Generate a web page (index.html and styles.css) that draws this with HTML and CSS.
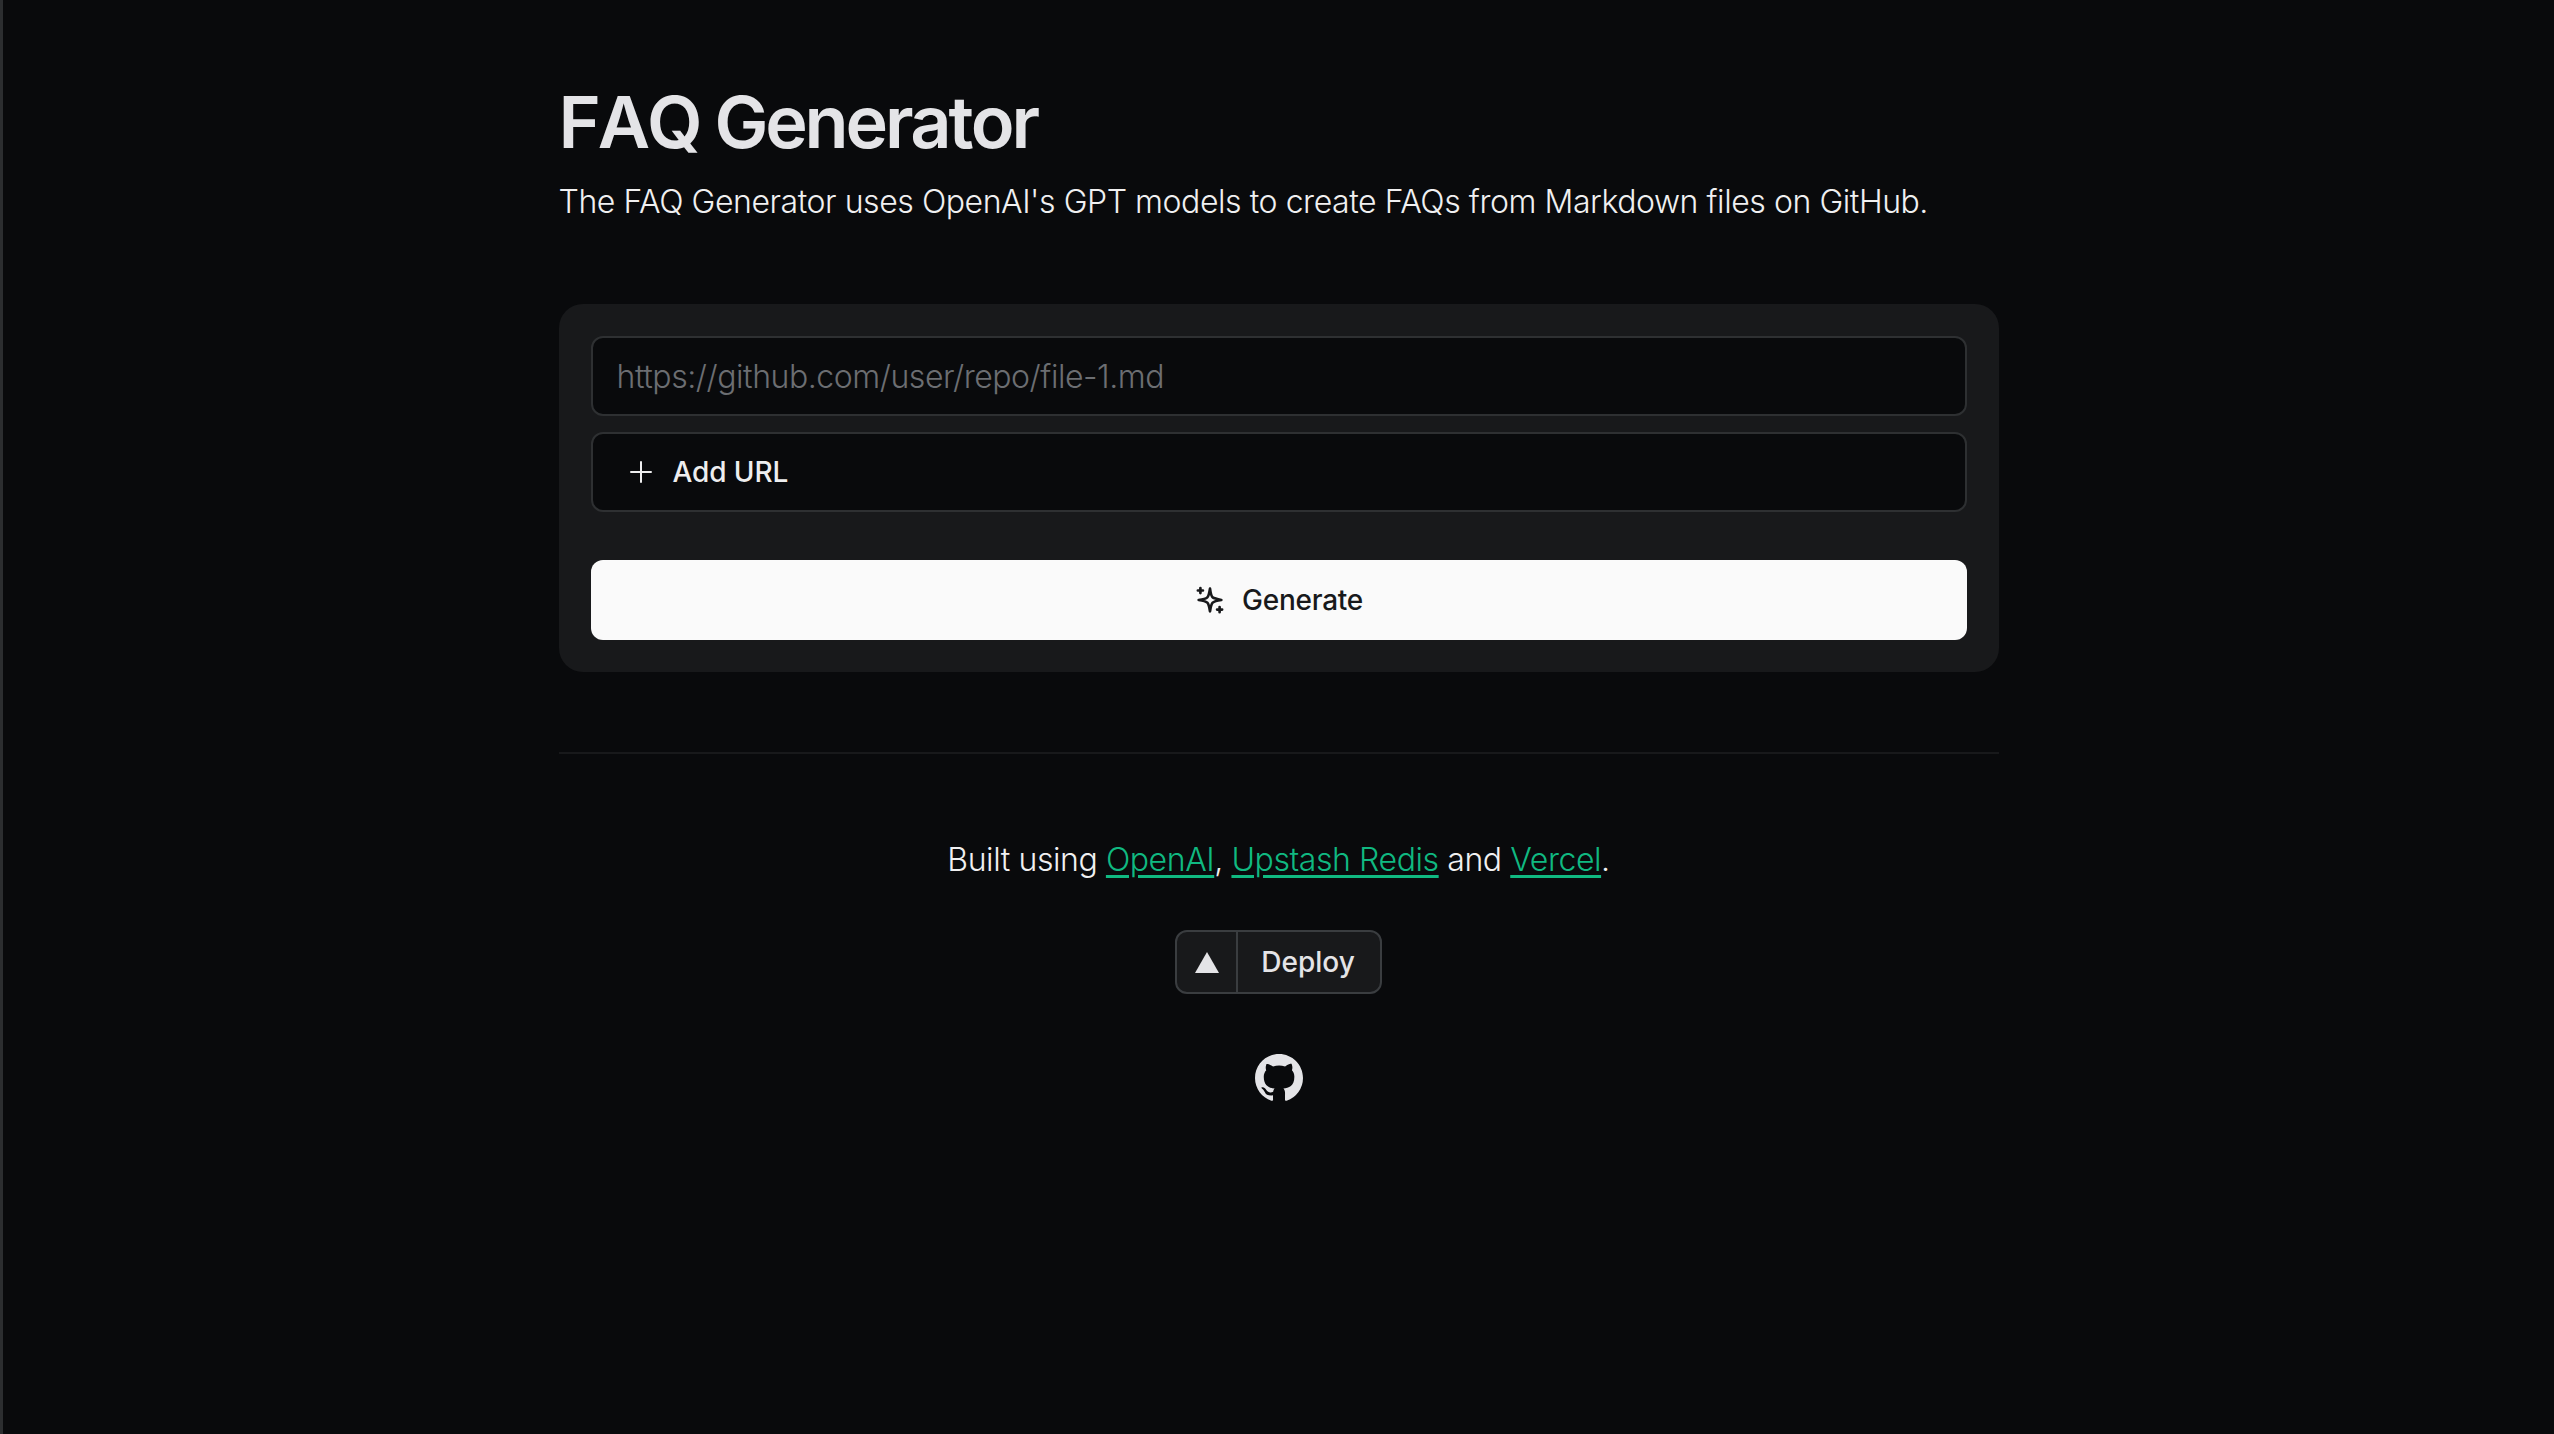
FILE: index.html
```html
<!DOCTYPE html>
<html lang="en">
<head>
<meta charset="utf-8">
<title>FAQ Generator</title>
<link rel="stylesheet" href="styles.css">
</head>
<body>
<main class="page">
  <h1 class="title">FAQ Generator</h1>
  <p class="lead">The FAQ Generator uses OpenAI's GPT models to create FAQs from Markdown files on GitHub.</p>

  <form class="card">
    <input class="field" type="text" placeholder="https://github.com/user/repo/file-1.md">
    <button class="add" type="button">
      <svg class="add-icon" viewBox="0 0 24 24" fill="none" stroke="currentColor" stroke-width="1.5" stroke-linecap="round"><path d="M12 4.5v15M4.5 12h15"/></svg>
      Add URL
    </button>
    <button class="generate" type="button">
      <svg class="spark" viewBox="0 0 24 24" fill="none" stroke="currentColor" stroke-width="2" stroke-linejoin="round" stroke-linecap="round">
        <path d="M12 3.500q.800 5.700 2 6.500t6.500 2q-5.300.800-6.500 2t-2 6.500q-.800-5.300-2-6.500t-6.500-2q5.300-.800 6.500-2t2-6.500z"/>
        <path d="M4.800 3v3.800M2.900 4.900h3.800M19.200 17.300v3.800M17.300 19.200h3.800"/>
      </svg>
      Generate
    </button>
  </form>

  <hr class="rule">

  <footer class="foot">
    <p class="built">Built using <a href="#">OpenAI</a>, <a href="#">Upstash Redis</a> and <a href="#">Vercel</a>.</p>
    <a class="deploy" href="#">
      <span class="deploy-mark"><svg viewBox="0 0 24 21" fill="currentColor"><path d="M12 0l12 21H0z"/></svg></span>
      <span class="deploy-text">Deploy</span>
    </a>
    <a class="gh" href="#">
      <svg viewBox="0 0 16 16" fill="currentColor"><path d="M8 0C3.58 0 0 3.580 0 8c0 3.540 2.290 6.530 5.470 7.590.4.070.55-.170.55-.380 0-.190-.010-.820-.010-1.490-2.010.370-2.530-.490-2.690-.940-.090-.230-.480-.940-.820-1.130-.280-.150-.680-.520-.010-.530.630-.010 1.080.580 1.230.820.720 1.210 1.870.870 2.330.660.070-.520.280-.870.510-1.070-1.780-.200-3.640-.890-3.640-3.950 0-.870.310-1.590.820-2.150-.080-.200-.360-1.020.080-2.120 0 0 .670-.210 2.200.820.640-.180 1.320-.270 2-.270s1.360.090 2 .270c1.530-1.040 2.200-.820 2.200-.820.440 1.100.160 1.920.080 2.120.510.560.820 1.270.820 2.150 0 3.070-1.870 3.750-3.650 3.950.290.250.540.730.540 1.480 0 1.070-.010 1.930-.010 2.200 0 .210.150.460.550.380A8.013 8.013 0 0016 8c0-4.420-3.580-8-8-8z"/></svg>
    </a>
  </footer>
</main>
</body>
</html>
```
FILE: styles.css
```css
* { box-sizing: border-box; }

body {
  margin: 0;
  min-height: 1434px;
  background: #090a0c;
  border-left: 3px solid #2c2e30;
  color: #e8e8ea;
  font-family: Inter, "Liberation Sans", sans-serif;
}

.page {
  width: 1440px;
  margin: 0 auto;
  padding-top: 80px;
}

.title {
  margin: 0;
  font-size: 72px;
  line-height: 84px;
  font-weight: 600;
  font-kerning: none;
  letter-spacing: -3.15px;
  color: #e4e4e7;
}

.lead {
  margin: 14px 0 0;
  font-size: 32px;
  font-weight: 350;
  line-height: 48px;
  letter-spacing: -0.44px;
  color: #f0f0f1;
}

.card {
  margin-top: 78px;
  padding: 32px;
  display: flex;
  flex-direction: column;
  background: #18191b;
  border-radius: 24px;
}

.field, .add {
  height: 80px;
  width: 100%;
  background: #090a0c;
  border: 2px solid #2e3032;
  border-radius: 12px;
  font-family: inherit;
}

.field {
  padding: 0 24px;
  font-size: 32px;
  font-weight: 350;
  letter-spacing: -0.45px;
  color: #e8e8ea;
}

.field::placeholder { color: #6c6e72; opacity: 1; }

.add {
  margin-top: 16px;
  padding: 0 32px;
  display: flex;
  align-items: center;
  gap: 16px;
  font-size: 28px;
  font-weight: 450;
  letter-spacing: -0.1px;
  color: #eeeeef;
}

.add-icon { width: 32px; height: 32px; }

.generate {
  margin-top: 48px;
  height: 80px;
  display: flex;
  align-items: center;
  justify-content: center;
  gap: 16px;
  background: #fafafa;
  border: 0;
  border-radius: 12px;
  font-family: inherit;
  font-size: 28px;
  font-weight: 450;
  letter-spacing: -0.25px;
  color: #18191b;
}

.spark { width: 32px; height: 32px; }

.rule {
  margin: 80px 0 0;
  border: 0;
  border-top: 2px solid #18191b;
}

.foot {
  display: flex;
  flex-direction: column;
  align-items: center;
}

.built {
  margin: 82px 0 0;
  font-size: 32px;
  font-weight: 350;
  line-height: 48px;
  letter-spacing: -0.42px;
  color: #f0f0f1;
}

.built a {
  color: #10b981;
  text-underline-offset: 4px;
}

.deploy {
  margin-top: 46px;
  height: 64px;
  display: flex;
  background: #18191b;
  border: 2px solid #3a3d40;
  border-radius: 12px;
  color: #e4e4e7;
  text-decoration: none;
}

.deploy-mark {
  width: 61px;
  display: flex;
  align-items: center;
  justify-content: center;
  border-right: 2px solid #3a3d40;
}

.deploy-mark svg { width: 24px; height: 21px; }

.deploy-text {
  padding: 0 25px 0 23px;
  font-size: 28px;
  font-weight: 450;
  line-height: 60px;
}

.gh {
  margin-top: 60px;
  width: 48px;
  height: 48px;
  color: #e4e4e7;
}

.gh svg { display: block; width: 48px; height: 48px; }
```
